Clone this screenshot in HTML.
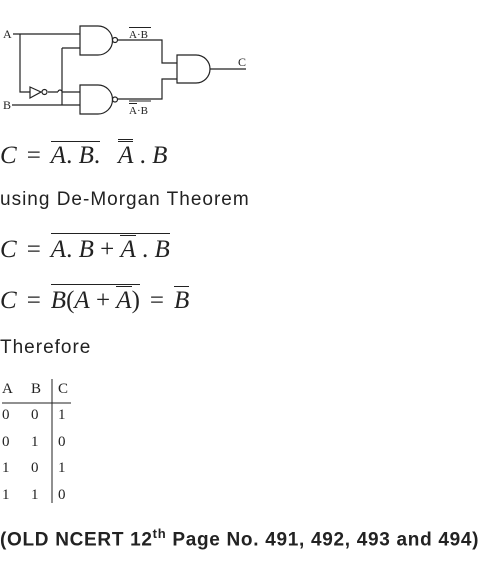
<!DOCTYPE html>
<html><head><style>
body{margin:0;width:479px;height:570px;background:#fff;color:#222;font-family:"Liberation Sans",sans-serif;position:relative;overflow:hidden}
.m{position:absolute;left:0;font-family:"Liberation Serif",serif;font-size:25px;white-space:nowrap}
.m i{font-style:italic}
.o{display:inline-block;border-top:1.3px solid #222;padding-top:1px;line-height:25px}
.s{display:inline-block;width:10px}
.t{position:absolute;left:0;font-size:19px;white-space:nowrap;letter-spacing:1px}
</style></head><body>
<svg width="260" height="120" style="position:absolute;left:0;top:20px" viewBox="0 20 260 120" font-family="Liberation Serif" font-size="12" fill="none" stroke="#222" stroke-width="1.2">
<text x="3" y="38" fill="#222" stroke="none">A</text>
<text x="3" y="109" fill="#222" stroke="none">B</text>
<path d="M13 34H80M20 34V92H30M48 92H58M62 92H80M58 92a2 2 0 0 1 4 0M62 48H80M62 48V105M12 105H80"/>
<path d="M30 87V98L41 92Z"/><circle cx="44.5" cy="92" r="2.5"/>
<path d="M80 26H98a14 14 0 0 1 0 29H80Z"/><circle cx="115" cy="40" r="2.5"/>
<path d="M80 85H98a14 14 0 0 1 0 29H80Z"/><circle cx="115" cy="99.5" r="2.5"/>
<path d="M118 40H162V63H177M118 99H162V79H177"/>
<path d="M177 55H196a14 14 0 0 1 0 28H177Z"/><path d="M210 69H246"/>
<text x="238" y="66" fill="#222" stroke="none">C</text>
<text x="129" y="38" fill="#222" stroke="none" font-size="11">A·B</text><path d="M129 27.5H151" stroke-width="1"/>
<text x="129" y="114" fill="#222" stroke="none" font-size="11">A·B</text><path d="M129 101H151M129 103.5H137" stroke-width="1"/>
</svg>
<div class="m" style="top:139px"><i>C</i><span class="s"></span>=<span class="s"></span><span class="o"><i>A</i>. <i>B</i>.</span><span class="s" style="width:18px"></span><span class="o"><span class="o"><i>A</i></span></span>&nbsp;.&nbsp;<i>B</i></div>
<div class="t" style="top:189px">using De-Morgan Theorem</div>
<div class="m" style="top:233px"><i>C</i><span class="s"></span>=<span class="s"></span><span class="o"><i>A</i>. <i>B</i>&nbsp;+&nbsp;<span class="o"><i>A</i></span>&nbsp;.&nbsp;<i>B</i></span></div>
<div class="m" style="top:284px"><i>C</i><span class="s"></span>=<span class="s"></span><span class="o"><i>B</i>(<i>A</i>&nbsp;+&nbsp;<span class="o"><i>A</i></span>)</span><span class="s"></span>=<span class="s"></span><span class="o"><i>B</i></span></div>
<div class="t" style="top:337px">Therefore</div>
<svg width="80" height="130" style="position:absolute;left:0;top:375px" font-family="Liberation Serif" font-size="15" fill="#222">
<text x="2" y="18">A</text><text x="31" y="18">B</text><text x="58" y="18">C</text>
<path d="M2 28H71M52 4V128" stroke="#222" stroke-width="1"/>
<text x="2" y="44">0</text><text x="31" y="44">0</text><text x="58" y="44">1</text>
<text x="2" y="71">0</text><text x="31" y="71">1</text><text x="58" y="71">0</text>
<text x="2" y="97">1</text><text x="31" y="97">0</text><text x="58" y="97">1</text>
<text x="2" y="124">1</text><text x="31" y="124">1</text><text x="58" y="124">0</text>
</svg>
<div class="t" style="top:526px;font-weight:bold;letter-spacing:0.7px">(OLD NCERT 12<sup style="font-size:13px">th</sup> Page No. 491, 492, 493 and 494)</div>
</body></html>
